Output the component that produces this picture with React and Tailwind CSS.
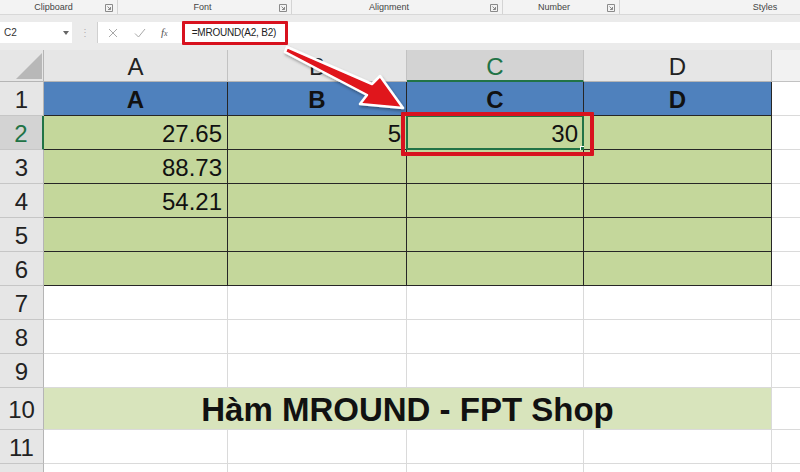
const COLS = [
  { key: "A", w: "w-[184px]" },
  { key: "B", w: "w-[179px]" },
  { key: "C", w: "w-[177px]" },
  { key: "D", w: "w-[188px]" },
];

const DATA = {
  2: { A: "27.65", B: "5", C: "30" },
  3: { A: "88.73" },
  4: { A: "54.21" },
};

function DialogIcon() {
  return (
    <svg width="8" height="8" viewBox="0 0 8 8" className="shrink-0">
      <path d="M0.5 0.5h7v7h-7z" fill="none" stroke="#8a8a8a" strokeWidth="1" />
      <path d="M2.5 2.5l3 3M5.5 3v2.5H3" fill="none" stroke="#8a8a8a" strokeWidth="1" />
    </svg>
  );
}

function RibbonGroup({ label, w, pad, last }) {
  return (
    <div className={`${w} h-full flex items-end pb-[1px] relative ${last ? "" : "border-r border-[#d4d4d4]"}`}>
      <div className={`flex-1 text-center text-[9px] leading-[11px] text-[#444] ${pad}`}>{label}</div>
      {!last && (
        <div className="pr-[4px] pb-[1px] flex items-center">
          <DialogIcon />
        </div>
      )}
    </div>
  );
}

function RowHeader({ n, active }) {
  return (
    <div
      className={`w-[44px] shrink-0 h-full flex items-center justify-center pt-[3px] text-[24px] border-b border-[#c6c6c6] ${
        active
          ? "bg-[#d3d3d3] text-[#217346] border-r-2 border-r-[#217346]"
          : "bg-[#e6e6e6] text-[#222] border-r border-r-[#b5b5b5]"
      }`}
    >
      {n}
    </div>
  );
}

function Row({ n, label = n, h = "h-[34px]", children }) {
  return (
    <div className={`flex ${h}`}>
      <RowHeader n={label} active={n === 2} />
      {children}
    </div>
  );
}

function Cell({ w, kind, children, right, selected }) {
  const styles = {
    blue: "bg-[#4f81bd] border-r border-b border-[#262626] justify-center font-bold",
    green: "bg-[#c4d79b] border-r border-b border-[#262626]",
    white: "bg-white border-r border-b border-[#dadada]",
  };
  return (
    <div
      className={`${w} shrink-0 h-full flex items-center pt-[3px] text-[24px] text-[#111] relative ${styles[kind]} ${
        right ? "justify-end pr-[5px]" : ""
      }`}
    >
      {children}
      {selected && (
        <div className="absolute inset-[-1px] border-2 border-[#217346]">
          <div className="absolute right-[-4px] bottom-[-4px] w-[6px] h-[6px] bg-[#217346] border border-white" />
        </div>
      )}
    </div>
  );
}

function EmptyTail() {
  return <div className="flex-1 h-full bg-white border-b border-[#dadada]" />;
}

export default function App() {
  const rows = [];
  for (let n = 1; n <= 9; n++) {
    rows.push(
      <Row key={n} n={n}>
        {COLS.map((c) => {
          if (n === 1) {
            return (
              <Cell key={c.key} w={c.w} kind="blue">
                {c.key}
              </Cell>
            );
          }
          const kind = n <= 6 ? "green" : "white";
          const val = DATA[n] && DATA[n][c.key];
          return (
            <Cell key={c.key} w={c.w} kind={kind} right selected={n === 2 && c.key === "C"}>
              {val}
            </Cell>
          );
        })}
        <EmptyTail />
      </Row>
    );
  }

  return (
    <div className="w-[800px] h-[472px] overflow-hidden relative bg-white font-['Liberation_Sans',Arial,sans-serif]">
      {/* ribbon group labels */}
      <div className="h-[15px] flex bg-[#f3f3f3] border-b border-[#d8d8d8]">
        <RibbonGroup label="Clipboard" w="w-[118px]" pad="pl-[2px]" />
        <RibbonGroup label="Font" w="w-[174px]" pad="pl-[8px]" />
        <RibbonGroup label="Alignment" w="w-[211px]" pad="pr-[4px]" />
        <RibbonGroup label="Number" w="w-[117px]" pad="pr-[2px]" />
        <RibbonGroup label="Styles" w="flex-1" pad="pl-[110px]" last />
      </div>

      {/* formula bar */}
      <div className="h-[35px] bg-[#ebebeb] pt-[7px] flex">
        <div className="w-[72px] h-[21px] bg-white flex items-center justify-between pl-[4px] pr-[3px] text-[10px] text-[#333]">
          <span>C2</span>
          <svg width="6" height="4" viewBox="0 0 6 4">
            <path d="M0 0h6L3 4z" fill="#666" />
          </svg>
        </div>
        <div className="w-[25px] h-[21px] flex items-center justify-center text-[10px] text-[#b0b0b0]">⋮</div>
        <div className="flex-1 h-[21px] bg-white border-l border-[#d0d0d0] flex items-center">
          <svg width="10" height="10" viewBox="0 0 10 10" className="ml-[10px]">
            <path d="M1 1l8 8M9 1L1 9" stroke="#a8a8a8" strokeWidth="1" />
          </svg>
          <svg width="12" height="10" viewBox="0 0 12 10" className="ml-[16px]">
            <path d="M1 5.5l3.5 3.5L11 1" fill="none" stroke="#a8a8a8" strokeWidth="1" />
          </svg>
          <span className="ml-[15px] text-[11px] italic text-[#555] font-['Liberation_Serif',serif]">
            f<span className="text-[8px]">x</span>
          </span>
          <span className="ml-[24px] text-[10px] tracking-[-0.2px] text-[#222]">=MROUND(A2, B2)</span>
        </div>
      </div>

      {/* column headers */}
      <div className="flex h-[32px]">
        <div className="w-[44px] shrink-0 h-full bg-[#e6e6e6] border-r border-b border-[#b5b5b5] flex items-end justify-end pr-[1px] pb-[2px]">
          <svg width="26" height="26" viewBox="0 0 26 26">
            <path d="M26 0v26H0z" fill="#b8b8b8" />
          </svg>
        </div>
        {COLS.map((c) => (
          <div
            key={c.key}
            className={`${c.w} shrink-0 h-full flex items-center justify-center pt-[3px] text-[24px] border-r border-[#c2c2c2] ${
              c.key === "C"
                ? "bg-[#d3d3d3] text-[#217346] border-b-2 border-b-[#217346]"
                : "bg-[#e6e6e6] text-[#222] border-b border-b-[#b5b5b5]"
            }`}
          >
            {c.key}
          </div>
        ))}
        <div className="flex-1 h-full bg-[#f2f2f2] border-b border-[#c2c2c2]" />
      </div>

      {rows}

      <Row n={10} h="h-[42px]">
        <div className="w-[728px] shrink-0 h-full bg-[#d8e4bc] border-r border-b border-[#dadada] flex items-center justify-center pt-[2px] text-[33px] font-bold text-[#111]">
          Hàm MROUND - FPT Shop
        </div>
        <EmptyTail />
      </Row>

      <Row n={11}>
        {COLS.map((c) => (
          <Cell key={c.key} w={c.w} kind="white" />
        ))}
        <EmptyTail />
      </Row>
      <Row n={12} label="">
        {COLS.map((c) => (
          <Cell key={c.key} w={c.w} kind="white" />
        ))}
        <EmptyTail />
      </Row>

      {/* annotation overlays */}
      <div className="absolute left-[182px] top-[21px] w-[106px] h-[24px] border-[3px] border-[#d8121f] rounded-[1px]" />
      <div className="absolute left-[401px] top-[112px] w-[193px] h-[44px] border-[4px] border-[#d8121f] rounded-[1px]" />
      <svg className="absolute left-0 top-0 pointer-events-none" width="800" height="472" viewBox="0 0 800 472">
        <defs>
          <filter id="sh" x="-20%" y="-20%" width="140%" height="140%">
            <feDropShadow dx="1" dy="2" stdDeviation="1.5" floodColor="#000" floodOpacity="0.35" />
          </filter>
        </defs>
        <path
          d="M287 47 L372 84 L380 76 L403 108 L360 104 L367 95 L285 52 Z"
          fill="#e0121e"
          stroke="#fff"
          strokeWidth="2.5"
          strokeLinejoin="round"
          filter="url(#sh)"
        />
      </svg>
    </div>
  );
}
